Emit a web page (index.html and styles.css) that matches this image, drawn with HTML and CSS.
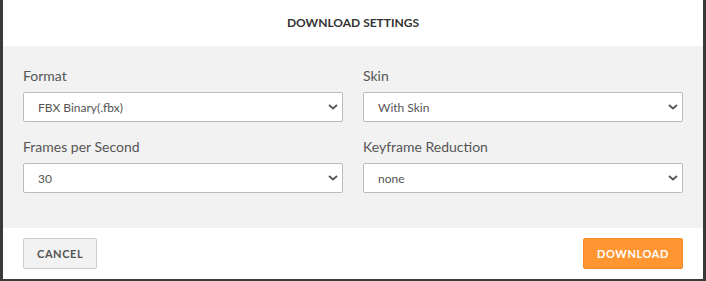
FILE: index.html
```html
<!DOCTYPE html>
<html lang="en">
<head>
    <meta charset="UTF-8">
    <meta name="viewport" content="width=device-width, initial-scale=1.0">
    <title>Download Settings</title>
    <link rel="stylesheet" href="styles.css">
</head>
<body>
    <div class="modal">
        <div class="modal-header">
            <h2 class="modal-title">Download Settings</h2>
        </div>

        <div class="modal-body">
            <div class="form-group">
                <label for="format">Format</label>
                <div class="select-wrap">
                    <select id="format">
                        <option>FBX Binary(.fbx)</option>
                    </select>
                    <svg class="chevron" width="10" height="6" viewBox="0 0 10 6"><path d="M1 1l4 3.5L9 1" fill="none" stroke="#555" stroke-width="1.8"/></svg>
                </div>
            </div>
            <div class="form-group">
                <label for="skin">Skin</label>
                <div class="select-wrap">
                    <select id="skin">
                        <option>With Skin</option>
                    </select>
                    <svg class="chevron" width="10" height="6" viewBox="0 0 10 6"><path d="M1 1l4 3.5L9 1" fill="none" stroke="#555" stroke-width="1.8"/></svg>
                </div>
            </div>
            <div class="form-group">
                <label for="fps">Frames per Second</label>
                <div class="select-wrap">
                    <select id="fps">
                        <option>30</option>
                    </select>
                    <svg class="chevron" width="10" height="6" viewBox="0 0 10 6"><path d="M1 1l4 3.5L9 1" fill="none" stroke="#555" stroke-width="1.8"/></svg>
                </div>
            </div>
            <div class="form-group">
                <label for="reduction">Keyframe Reduction</label>
                <div class="select-wrap">
                    <select id="reduction">
                        <option>none</option>
                    </select>
                    <svg class="chevron" width="10" height="6" viewBox="0 0 10 6"><path d="M1 1l4 3.5L9 1" fill="none" stroke="#555" stroke-width="1.8"/></svg>
                </div>
            </div>
        </div>

        <div class="modal-footer">
            <button class="btn btn-cancel">Cancel</button>
            <button class="btn btn-download">Download</button>
        </div>
    </div>
</body>
</html>
```

FILE: styles.css
```css
body {
    margin: 0;
    background-color: #3a3a3a;
    font-family: Lato, "Open Sans", sans-serif;
}

.modal {
    width: 700px;
    height: 279px;
    margin: 0 3px;
    background-color: white;
    display: flex;
    flex-direction: column;
}

.modal-header {
    height: 44px;
    padding-bottom: 2px;
    display: flex;
    align-items: center;
    justify-content: center;
}

.modal-title {
    margin: 0;
    font-size: 12px;
    font-weight: bold;
    color: #333;
    text-transform: uppercase;
}

.modal-body {
    background-color: #f2f2f2;
    padding: 20px 20px 5px;
    display: grid;
    grid-template-columns: 320px 320px;
    column-gap: 20px;
    padding-bottom: 20px;
}

.form-group {
    margin-bottom: 15px;
}

.form-group label {
    display: block;
    font-size: 14px;
    line-height: 20px;
    margin-bottom: 6px;
    color: #555;
}

.select-wrap {
    position: relative;
}

.select-wrap select {
    width: 100%;
    height: 30px;
    padding: 0 14px;
    border: 1px solid #bbb;
    border-radius: 2px;
    background-color: white;
    font-family: Lato, "Open Sans", sans-serif;
    font-size: 12px;
    color: #555;
    appearance: none;
    -webkit-appearance: none;
    outline: none;
}

.chevron {
    position: absolute;
    right: 5px;
    top: 12px;
    pointer-events: none;
}

.modal-footer {
    flex: 1;
    display: flex;
    justify-content: space-between;
    align-items: flex-start;
    padding: 10px 20px 0;
}

.btn {
    height: 31px;
    padding: 0 13px;
    border-radius: 2px;
    font-family: Lato, "Open Sans", sans-serif;
    font-size: 11px;
    font-weight: bold;
    text-transform: uppercase;
    letter-spacing: 0.6px;
    cursor: pointer;
}

.btn-cancel {
    background-color: #f2f2f2;
    border: 1px solid #ccc;
    color: #555;
}

.btn-download {
    background-color: #ff9632;
    border: 1px solid #f28a25;
    color: white;
}
```
